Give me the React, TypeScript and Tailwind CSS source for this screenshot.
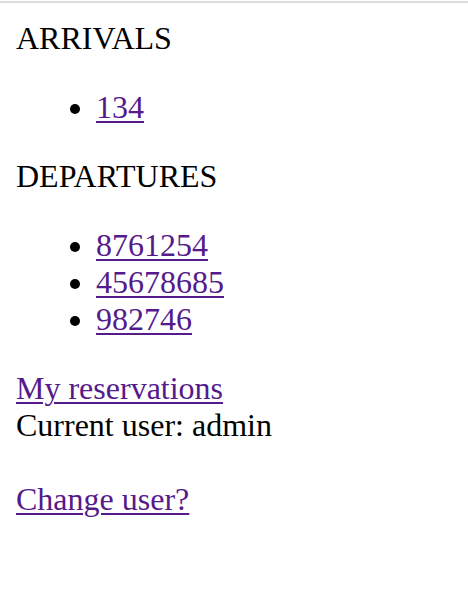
export default function App() {
  const arrivals = ['134'];
  const departures = ['8761254', '45678685', '982746'];
  const link = 'text-[#551a8b] underline decoration-[2px] underline-offset-[3px]';

  return (
    <div className="min-h-[602px] bg-white text-black font-['Liberation_Serif','Times_New_Roman',serif] text-[32px] leading-[37px]">
      <div className="h-[2px] mt-[1px] bg-[#dcdcdc]" />
      <div className="px-4 pt-[17px] pb-4">
        <div>ARRIVALS</div>
        <ul className="list-disc pl-[80px] my-[32px]">
          {arrivals.map((n) => (
            <li key={n}>
              <a href="#" className={link}>{n}</a>
            </li>
          ))}
        </ul>
        <div>DEPARTURES</div>
        <ul className="list-disc pl-[80px] my-[32px]">
          {departures.map((n) => (
            <li key={n}>
              <a href="#" className={link}>{n}</a>
            </li>
          ))}
        </ul>
        <a href="#" className={link}>My reservations</a>
        <div>Current user: admin</div>
        <div className="h-[37px]" />
        <a href="#" className={link}>Change user?</a>
      </div>
    </div>
  );
}
